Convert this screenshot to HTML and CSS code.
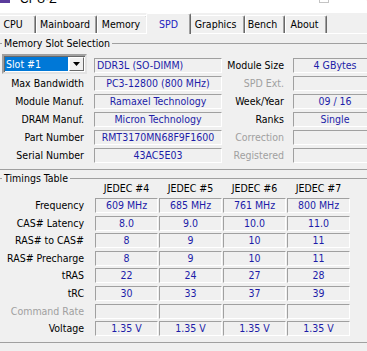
FILE: index.html
```html
<!DOCTYPE html>
<html lang="en">
<head>
  <meta charset="UTF-8">
  <title>CPU-Z</title>
  <link rel="stylesheet" href="styles.css">
</head>
<body>
  <div class="titlebar">
    <span class="app-icon"></span>
    <span class="app-title">CPU-Z</span>
    <span class="win-max"></span>
    <span class="win-close">✕</span>
  </div>

  <div class="tabs">
    <div class="tab tab-cpu">CPU</div>
    <div class="tab tab-mainboard">Mainboard</div>
    <div class="tab tab-memory">Memory</div>
    <div class="tab tab-spd active">SPD</div>
    <div class="tab tab-graphics">Graphics</div>
    <div class="tab tab-bench">Bench</div>
    <div class="tab tab-about">About</div>
  </div>

  <div class="panel">
    <fieldset class="group slot-group">
      <legend>Memory Slot Selection</legend>
      <div class="slot-grid">
        <div class="combo">
          <span class="combo-value">Slot #1</span>
          <span class="combo-btn">
            <svg width="7" height="4" viewBox="0 0 7 4"><polygon points="0,0 7,0 3.5,4" fill="#000"/></svg>
          </span>
        </div>
        <div class="field left">DDR3L (SO-DIMM)</div>
        <div class="label">Module Size</div>
        <div class="field">4 GBytes</div>

        <div class="label">Max Bandwidth</div>
        <div class="field">PC3-12800 (800 MHz)</div>
        <div class="label off">SPD Ext.</div>
        <div class="field"></div>

        <div class="label">Module Manuf.</div>
        <div class="field">Ramaxel Technology</div>
        <div class="label">Week/Year</div>
        <div class="field">09 / 16</div>

        <div class="label">DRAM Manuf.</div>
        <div class="field">Micron Technology</div>
        <div class="label">Ranks</div>
        <div class="field">Single</div>

        <div class="label">Part Number</div>
        <div class="field">RMT3170MN68F9F1600</div>
        <div class="label off">Correction</div>
        <div class="field"></div>

        <div class="label">Serial Number</div>
        <div class="field">43AC5E03</div>
        <div class="label off">Registered</div>
        <div class="field"></div>
      </div>
    </fieldset>

    <fieldset class="group timing-group">
      <legend>Timings Table</legend>
      <div class="timing-grid">
        <div></div>
        <div class="head">JEDEC #4</div>
        <div class="head">JEDEC #5</div>
        <div class="head">JEDEC #6</div>
        <div class="head">JEDEC #7</div>

        <div class="label">Frequency</div>
        <div class="field">609 MHz</div>
        <div class="field">685 MHz</div>
        <div class="field">761 MHz</div>
        <div class="field">800 MHz</div>

        <div class="label">CAS# Latency</div>
        <div class="field">8.0</div>
        <div class="field">9.0</div>
        <div class="field">10.0</div>
        <div class="field">11.0</div>

        <div class="label">RAS# to CAS#</div>
        <div class="field">8</div>
        <div class="field">9</div>
        <div class="field">10</div>
        <div class="field">11</div>

        <div class="label">RAS# Precharge</div>
        <div class="field">8</div>
        <div class="field">9</div>
        <div class="field">10</div>
        <div class="field">11</div>

        <div class="label">tRAS</div>
        <div class="field">22</div>
        <div class="field">24</div>
        <div class="field">27</div>
        <div class="field">28</div>

        <div class="label">tRC</div>
        <div class="field">30</div>
        <div class="field">33</div>
        <div class="field">37</div>
        <div class="field">39</div>

        <div class="label off">Command Rate</div>
        <div class="field"></div>
        <div class="field"></div>
        <div class="field"></div>
        <div class="field"></div>

        <div class="label">Voltage</div>
        <div class="field">1.35 V</div>
        <div class="field">1.35 V</div>
        <div class="field">1.35 V</div>
        <div class="field">1.35 V</div>
      </div>
    </fieldset>
  </div>
</body>
</html>
```

FILE: styles.css
```css
* {
  box-sizing: border-box;
}

body {
  margin: 0;
  width: 367px;
  height: 351px;
  overflow: hidden;
  background: #f0f0f0;
  font-family: "DejaVu Sans Condensed", "Liberation Sans", sans-serif;
  font-size: 10.5px;
  color: #000;
}

/* window title, mostly scrolled out of view */
.titlebar {
  display: flex;
  align-items: flex-start;
  height: 13px;
  background: #fff;
  overflow: hidden;
}

.app-icon {
  flex: none;
  width: 10px;
  height: 10px;
  margin-top: -7px;
  background: #5b3c9c;
}

.app-title {
  flex: none;
  margin-left: 0;
  padding-left: 10px;
  margin-top: -7px;
  font-family: "Liberation Sans", sans-serif;
  font-size: 12px;
  line-height: 12px;
  white-space: nowrap;
}

.win-max {
  flex: none;
  width: 10px;
  height: 10px;
  margin-left: 262px;
  margin-top: -7px;
  border: 1px solid #c4c4c4;
}

.win-close {
  flex: none;
  margin-left: 36px;
  margin-top: -7px;
  font-size: 11px;
  line-height: 10px;
}

/* tabs */
.tabs {
  display: flex;
  align-items: flex-end;
  height: 20px;
  margin-left: -2px;
}

.tab {
  height: 18px;
  line-height: 17px;
  text-align: center;
  padding-right: 3px;
  border-top: 1px solid #fff;
  border-left: 1px solid #fff;
  border-right: 1px solid #696969;
  border-radius: 2px 2px 0 0;
  box-shadow: inset -1px 0 #a0a0a0;
  white-space: nowrap;
}

.tab-cpu { width: 38px; padding-right: 8px; }
.tab-mainboard { width: 61px; }
.tab-memory { width: 51px; }
.tab-graphics { width: 56px; }
.tab-bench { width: 40px; padding-right: 5px; }
.tab-about { width: 42px; }

.tab.active {
  position: relative;
  z-index: 1;
  width: 45px;
  height: 21px;
  line-height: 20px;
  margin: 0 -2px -1px;
  padding-right: 0;
  background: #f0f0f0;
  color: #2222c0;
}

.panel {
  border-top: 1px solid #fff;
}

/* group boxes */
.group {
  width: 392px;
  margin: 0 0 0 -3px;
  padding: 10px 0 6px 2px;
  border: 1px solid #a0a0a0;
  min-width: 0;
}

.group legend {
  margin-left: 2px;
  padding: 0 2px;
  line-height: 9px;
}

.slot-group {
  margin-top: 5px;
}

.timing-group {
  margin-top: 4px;
  padding-top: 0;
}

.label {
  text-align: right;
  padding-right: 10px;
  line-height: 15px;
  white-space: nowrap;
}

.label.off {
  color: #a0a0a0;
}

.field {
  border-top: 1px solid #a0a0a0;
  border-left: 1px solid #a0a0a0;
  border-right: 1px solid #fff;
  border-bottom: 1px solid #fff;
  line-height: 13px;
  text-align: center;
  color: #1c1ca8;
  white-space: nowrap;
  overflow: hidden;
}

.field.left {
  text-align: left;
  padding-left: 2px;
}

.slot-grid {
  display: grid;
  grid-template-columns: 94px 128px 71px 84px;
  grid-template-rows: repeat(6, 15px);
  row-gap: 3px;
}

.slot-grid .label:nth-child(4n+3) {
  padding-right: 9px;
}

/* slot combo box */
.combo {
  display: flex;
  align-self: start;
  width: 85px;
  height: 20px;
  margin: -4px 0 0 2px;
  padding: 1px;
  background: #fff;
  border-top: 2px solid #a0a0a0;
  border-left: 2px solid #a0a0a0;
  border-right: 2px solid #e3e3e3;
  border-bottom: 2px solid #e3e3e3;
  box-shadow: inset 1px 1px #696969;
}

.combo-value {
  flex: 1;
  margin-right: 1px;
  padding-left: 1px;
  background: #0078d7;
  color: #fff;
  line-height: 14px;
}

.combo-btn {
  display: flex;
  align-items: center;
  justify-content: center;
  width: 15px;
  background: #f0f0f0;
  border-top: 1px solid #fff;
  border-left: 1px solid #fff;
  border-right: 1px solid #696969;
  border-bottom: 1px solid #696969;
}

/* timings */
.timing-grid {
  display: grid;
  grid-template-columns: 94px repeat(4, 63px);
  grid-template-rows: 12.4px repeat(8, 15px);
  column-gap: 1px;
  row-gap: 2.6px;
}

.head {
  text-align: center;
  line-height: 10px;
  white-space: nowrap;
}
```
